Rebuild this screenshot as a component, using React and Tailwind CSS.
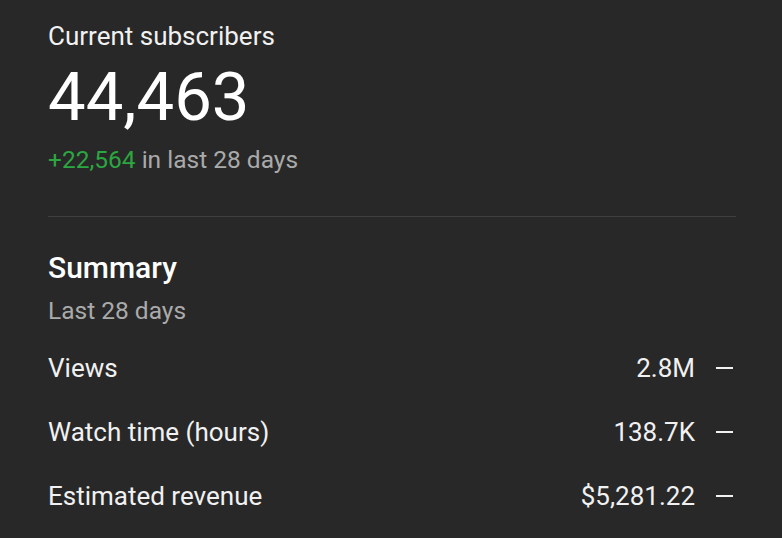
import React from "react";

const rows = [
  { label: "Views", value: "2.8M" },
  { label: "Watch time (hours)", value: "138.7K" },
  { label: "Estimated revenue", value: "$5,281.22" },
];

export default function App() {
  return (
    <div
      className="w-[782px] h-[538px] overflow-hidden bg-[#282828] text-white pl-12 pr-[46px] pt-5"
      style={{ fontFamily: "Roboto, 'Liberation Sans', sans-serif" }}
    >
      <div className="text-[26px] leading-[32px] text-[#f1f1f1]">Current subscribers</div>
      <div className="mt-[5px] text-[67px] leading-[80px]">44,463</div>
      <div className="mt-[9px] text-[24.5px] leading-[28px] text-[#aaaaaa]">
        <span className="text-[#2ba640]">+22,564</span> in last 28 days
      </div>

      <div className="mt-[42px] h-px bg-[#3f3f3f]" />

      <div className="mt-[33px] text-[30px] leading-[36px] font-medium">Summary</div>
      <div className="mt-[10px] text-[24.5px] leading-[30px] text-[#aaaaaa]">Last 28 days</div>

      <div className="mt-[10px] flex flex-col pr-[3px]">
        {rows.map((r) => (
          <div key={r.label} className="flex items-center h-16 text-[26px] text-[#f1f1f1]">
            <span className="flex-1">{r.label}</span>
            <span>{r.value}</span>
            <span className="ml-[21px] w-[17px] h-[2px] bg-[#f1f1f1]" />
          </div>
        ))}
      </div>
    </div>
  );
}
